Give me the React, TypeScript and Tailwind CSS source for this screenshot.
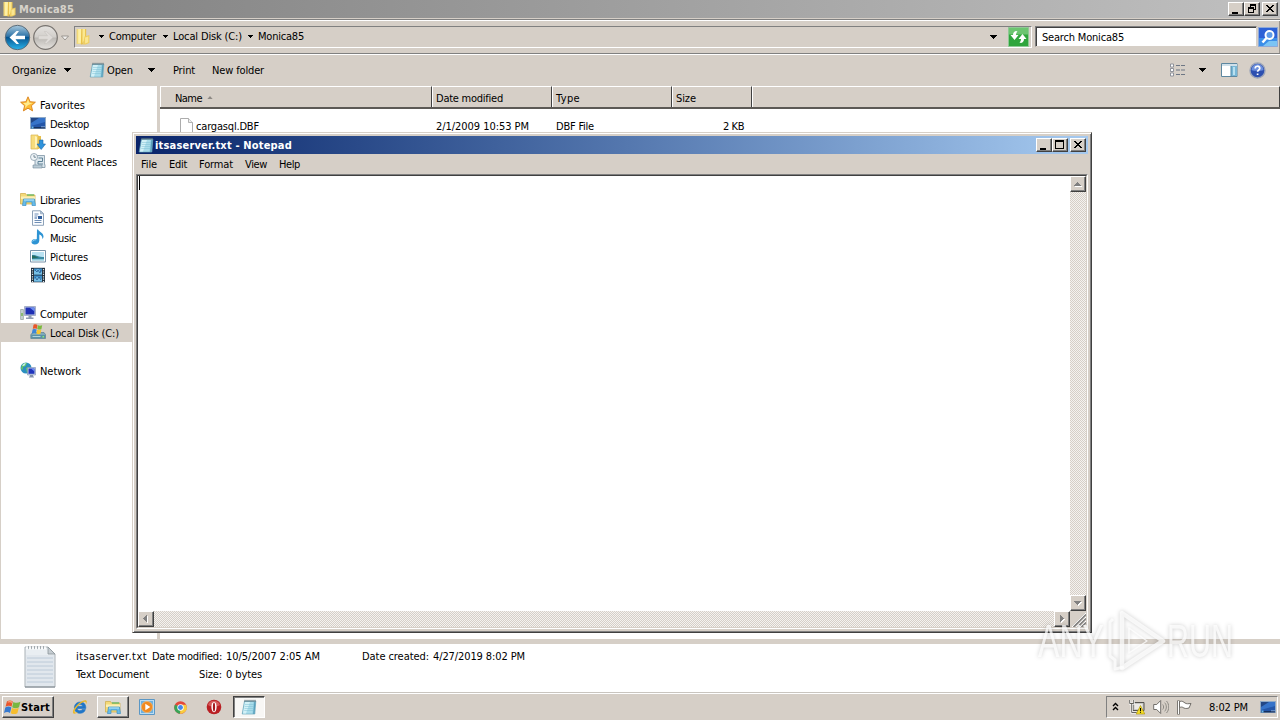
import { useLayoutEffect, useRef, useState } from "react";
import type { ReactNode } from "react";

/** One line of UI text, tracked so that it fills the given advance width. */
function Label({ text, w, className = "" }: { text: string; w: number; className?: string }) {
  const ref = useRef<HTMLSpanElement>(null);
  const [spacing, setSpacing] = useState(0);
  useLayoutEffect(() => {
    if (ref.current) setSpacing((w - ref.current.getBoundingClientRect().width) / text.length);
  }, [text, w]);
  return (
    <span className={`flex h-4 shrink-0 items-center whitespace-pre leading-4 ${className}`} style={{ width: w }}>
      <span ref={ref} style={{ letterSpacing: spacing }}>
        {text}
      </span>
    </span>
  );
}

function Down({ className = "" }: { className?: string }) {
  return (
    <svg className={`h-1 w-[7px] shrink-0 ${className}`} viewBox="0 0 7 4" shapeRendering="crispEdges">
      <path d="M0 0h7v1H6v1H5v1H4v1H3V3H2V2H1V1H0z" fill="#000" />
    </svg>
  );
}

function CrumbArrow({ className = "" }: { className?: string }) {
  return (
    <svg className={`h-[3px] w-[5px] shrink-0 ${className}`} viewBox="0 0 5 3" shapeRendering="crispEdges">
      <path d="M0 0h5v1H4v1H3v1H2V2H1V1H0z" fill="#000" />
    </svg>
  );
}

function Svg({ s = 16, children, className = "" }: { s?: number; children: ReactNode; className?: string }) {
  return (
    <svg width={s} height={s} viewBox="0 0 16 16" className={`shrink-0 ${className}`}>
      {children}
    </svg>
  );
}

const FolderIcon = ({ className = "", s = 16 }: { className?: string; s?: number }) => (
  <Svg className={className} s={s}>
    <path d="M1.500 1h5v14h-5z" fill="#f3d978" />
    <path d="M3 1h3v13.500H3z" fill="#fdf0a6" />
    <path d="M6 1h4.500v7L7 15.500H5.500z" fill="#e8c04a" />
    <path d="M7 1h2.500v10L7 14z" fill="#fbe88f" />
    <path d="M9 8l4.500-1.500V14L10 15.500H7.500z" fill="#efcd5f" />
    <path d="M9.500 9l3-1v5.500l-3 1z" fill="#fae692" />
  </Svg>
);

const NotepadIcon = ({ className = "", s = 16 }: { className?: string; s?: number }) => (
  <Svg className={className} s={s}>
    <path d="M3.500 2h11.300l-1 13H1.200z" fill="#8cc9de" stroke="#6aa3b8" strokeWidth=".7" />
    <path d="M4 3h8.500l-1 11.500H2z" fill="#a9dcea" />
    <path d="M4 3h5L5 14.500H2z" fill="#d3f1f7" />
    <path d="M13.300 3h1.200l-1 12h-1.300z" fill="#5aa0bb" />
    <path d="M4 5.500h9M3.700 7.500h9M3.500 9.500h9M3.200 11.500h9" stroke="#7fc0d4" strokeWidth=".5" />
    <path d="M4 .8v2.200M6 .8v2.200M8 .8v2.200M10 .8v2.200M12 .8v2.200M14 .8v2.200" stroke="#5c6a70" strokeWidth=".9" />
  </Svg>
);

const StarIcon = () => (
  <Svg>
    <path d="M8 .8l2.100 4.900 5.300.5-4 3.500 1.200 5.200L8 12.200l-4.600 2.700 1.200-5.200-4-3.500 5.300-.5z" fill="#fdbb35" stroke="#d9811c" strokeWidth=".9" />
    <path d="M8 3l1.300 3.700 3.500.3-5 2.300-3 3 .8-3.100L3 7l3.700-.3z" fill="#ffeb8e" />
  </Svg>
);

const DesktopIcon = () => (
  <Svg>
    <rect x=".5" y="2.500" width="15" height="11" fill="#2456a8" stroke="#8fa9c6" />
    <path d="M1 3h14v4L1 11z" fill="#3673c9" />
    <path d="M1 3h8L1 8z" fill="#234785" />
    <path d="M1 12h14v1.500H1z" fill="#16315f" />
    <path d="M1.500 11.500h2v2h-2z" fill="#69b9ee" />
    <path d="M11 11.800h4" stroke="#a8c7eb" strokeWidth=".7" />
  </Svg>
);

const DownloadsIcon = () => (
  <Svg>
    <path d="M1 1h7v14H1z" fill="#f7dc7c" stroke="#d9b550" strokeWidth=".7" />
    <path d="M8 2h3v12l-3 1z" fill="#e7bf4b" />
    <path d="M5 2l2 1v10l-2 1z" fill="#fff3b8" />
    <path d="M9.500 6h3.500v4h2.500L11.200 15.500 7 10h2.500z" fill="#2f93dc" stroke="#1b68ad" strokeWidth=".6" />
  </Svg>
);

const RecentIcon = () => (
  <Svg>
    <path d="M5 2.500h9.500v9H15v3H5z" fill="#dbe6ed" stroke="#7c93a3" strokeWidth=".8" />
    <circle cx="4" cy="4" r="3.500" fill="#f0f5f8" stroke="#899ca9" strokeWidth=".8" />
    <path d="M4 2v2.200h2" stroke="#57707f" strokeWidth=".8" fill="none" />
    <path d="M8.500 5h4v3.500H8V11h5" stroke="#5f8296" fill="none" />
    <path d="M3 12h9v3H3z" fill="#bacbd5" stroke="#748b9a" strokeWidth=".6" />
  </Svg>
);

const LibrariesIcon = ({ s = 16 }: { s?: number }) => (
  <Svg s={s}>
    <path d="M.5 2.500h5l1 1.500h8.500v9H.5z" fill="#f4da79" stroke="#cfaa46" strokeWidth=".7" />
    <path d="M1 5.500h14V8H1z" fill="#fcf0b5" />
    <path d="M7 4h7" stroke="#62b764" strokeWidth="1.300" />
    <path d="M3.500 8h11l1 6.500h-3.500V11H6v3.500H2.500z" fill="#69bce8" stroke="#3b8fc4" strokeWidth=".7" />
    <path d="M4 9h10" stroke="#b9e5f9" strokeWidth="1" />
  </Svg>
);

const DocumentIcon = () => (
  <Svg>
    <path d="M2.500.8h8l3 3v11.500h-11z" fill="#fbfdff" stroke="#8298b1" strokeWidth=".9" />
    <path d="M10.500.8v3h3z" fill="#b5c6da" stroke="#8298b1" strokeWidth=".6" />
    <path d="M4.500 4h4M4.500 6h3M4.500 10.500h7M4.500 12.500h7" stroke="#6082ae" strokeWidth=".9" />
    <path d="M8 6h4v3H8z" fill="#315e9b" />
    <path d="M4.500 8h2.500" stroke="#315e9b" />
  </Svg>
);

const MusicIcon = () => (
  <Svg>
    <path d="M8 .5c1 2.500 5.500 3 5.500 7 0 1.200-.6 2-1.200 2.500.4-2.800-1.300-4.200-3-4.600v6.400c0 2.200-2 3.700-4.500 3.700-2 0-3.300-1-3.300-2.500 0-2.200 2.800-3.400 5.300-2.700L7 .5z" fill="#2e94d4" />
    <path d="M2.700 12.500c.5-1.400 2-1.900 3.500-1.700" stroke="#9adaf8" fill="none" />
  </Svg>
);

const PicturesIcon = () => (
  <Svg>
    <path d="M.5 2.500h15v11.500H.5z" fill="#fff" stroke="#7993a9" />
    <path d="M2 4h12v8.500H2z" fill="#b9e2f2" />
    <path d="M2 7c4-.5 6 2 12 2v2.500H2z" fill="#3a8aa3" />
    <path d="M2 7.500c3 0 4 1.500 7 2L2 10.500z" fill="#266c5e" />
    <path d="M2 11h12v1.500H2z" fill="#8dc8d8" />
  </Svg>
);

const VideosIcon = () => (
  <Svg>
    <path d="M1 .8h14v14.500H1z" fill="#22303d" />
    <path d="M4 1.500h8v6H4zM4 8.500h8v6H4z" fill="#3b8cc8" />
    <path d="M4 4l4-2 4 3v2.500H4zM4 12l3-2 5 2v2.500H4z" fill="#76bfe5" />
    <path d="M5 3l2 2 1-2 2 3 1-3M5 10l2 3 2-3 2 3" stroke="#2a5f96" strokeWidth=".9" fill="none" />
    <path d="M2.500 2v13M13.500 2v13" stroke="#dfe7ec" strokeWidth="1.200" strokeDasharray="1.200 1.200" />
  </Svg>
);

const ComputerIcon = () => (
  <Svg>
    <path d="M.6 4.500h2.800v10H.6z" fill="#c7d2d3" stroke="#7d8f8d" strokeWidth=".6" />
    <path d="M1.300 8h1.400v3H1.300z" fill="#71b34d" />
    <path d="M4.500 1.500h11v9h-11z" fill="#c9d3e6" stroke="#8c98b4" strokeWidth=".7" />
    <path d="M5.500 2.500h9v7h-9z" fill="#1f2fb4" />
    <path d="M9.500 2.500h5v4z" fill="#6c8ef0" />
    <path d="M8.500 10.500h3v2h2v1.500H6v-1.500h2.500z" fill="#8f9bb2" />
  </Svg>
);

const DriveIcon = () => (
  <Svg>
    <path d="M.8 10.500L3 8.500h11l1.500 2v4H.8z" fill="#7fa9b9" stroke="#4d7688" strokeWidth=".6" />
    <path d="M1.200 11h14v3.200h-14z" fill="#5a91a6" />
    <path d="M2.500 12.500h8" stroke="#c6e2ea" strokeWidth=".8" />
    <path d="M12.500 12h1.500v1.500h-1.500z" fill="#8cf071" />
    <path d="M3.500.8c1.800-.8 3-.4 4 .2L6.800 4.900C5.500 4.300 4.500 4.300 2.800 4.900z" fill="#e8562a" />
    <path d="M7.900 1.300c1.500.7 2.800.6 4.300 0l-.8 3.900c-1.500.6-2.800.5-4.200-.2z" fill="#7cba3d" />
    <path d="M2.600 5.400c1.700-.7 3-.5 4.100.2L5.900 9.500c-1.300-.7-2.400-.6-4.100 0z" fill="#3c86d8" />
    <path d="M7.100 5.700c1.500.6 2.800.6 4.200 0l-.8 4c-1.400.7-2.700.5-4.100-.1z" fill="#f7c52f" />
  </Svg>
);

const NetworkIcon = () => (
  <Svg>
    <circle cx="6" cy="6" r="5.500" fill="#2b8fc0" />
    <path d="M2 3c2-2.500 4-2 5-2L5.500 4 3 5 2.500 8 1 7zM6 6l3-1 1 3-3 3z" fill="#69c860" />
    <path d="M2 3.500C3.500 1.500 5 1 6 1.200L4 4z" fill="#c5ecf7" />
    <path d="M7.500 5.500h8v7.500h-8z" fill="#c9d3e6" stroke="#7b8cae" strokeWidth=".6" />
    <path d="M8.500 6.500h6v5.300h-6z" fill="#2035bd" />
    <path d="M11 6.500h3.500v3z" fill="#6f8ff2" />
    <path d="M10 13h3v1.500h1v1H9v-1h1z" fill="#8492ab" />
  </Svg>
);

const FlagLogo = () => (
  <svg width="17" height="18" viewBox="0 0 14.500 14.500" className="shrink-0">
    <path d="M2.500 2.500c2-1.300 3.600-1 5 0L6.400 7C5 6 3.300 6 1.300 7z" fill="#e9552c" />
    <path d="M8 3c1.900 1 3.900 1 6-.2L12.800 7.400c-2 1.200-4 1-5.800.1z" fill="#78b741" />
    <path d="M1.100 7.600c2-1.100 3.700-1 5.200 0L5.100 12.300c-1.400-1-3.300-1-5.100 0z" fill="#3679cf" />
    <path d="M6.800 8c1.800.9 3.800.9 5.800-.1l-1.200 4.600c-2 1.100-4 .9-5.700 0z" fill="#f6bd2e" />
    <path d="M4 2c1-.4 2 0 3 .6L6.700 4C5.500 3 4.500 3.200 3 3.700z" fill="#f99a71" />
  </svg>
);

const raised = "border border-t-white border-l-white border-r-[#404040] border-b-[#404040] shadow-[inset_-1px_-1px_0_#808080]";

type Glyph = "min" | "max" | "restore" | "close";
function CaptionButton({ glyph, className = "" }: { glyph: Glyph; className?: string }) {
  return (
    <button className={`flex h-[14px] w-4 items-center justify-center bg-[#d6cfc7] ${raised} ${className}`}>
      <svg width="12" height="10" viewBox="0 0 12 10" className="shrink-0" shapeRendering="crispEdges">
        {glyph === "min" && <path d="M2 8h6v2H2z" />}
        {glyph === "max" && <path d="M1 0h9v9H1zM2 2v6h7V2z" fillRule="evenodd" />}
        {glyph === "restore" && (
          <path fillRule="evenodd" d="M4 0h6v6H8v3H2V3h2zM5 2v1h3v2h1V2zM3 5v3h4V5z" />
        )}
        {glyph === "close" && (
          <path d="M2 1h2v1h1v1h2V2h1V1h2v1H9v1H8v1H7v1h1v1h1v1h1v1H8V7H7V6H5v1H4v1H2V7h1V6h1V5h1V4H4V3H3V2H2z" />
        )}
      </svg>
    </button>
  );
}

function ScrollButton({ d }: { d: string }) {
  return (
    <div className={`flex h-4 w-4 shrink-0 items-center justify-center bg-[#d6cfc7] ${raised}`}>
      <svg width="10" height="10" viewBox="0 0 10 10" shapeRendering="crispEdges">
        <path d={d} fill="#fff" transform="translate(1 1)" />
        <path d={d} fill="#808080" />
      </svg>
    </div>
  );
}

const places: { text: string; w: number; icon: ReactNode; child?: boolean; on?: boolean }[][] = [
  [
    { text: "Favorites", w: 45, icon: <StarIcon /> },
    { text: "Desktop", w: 39, icon: <DesktopIcon />, child: true },
    { text: "Downloads", w: 52, icon: <DownloadsIcon />, child: true },
    { text: "Recent Places", w: 67, icon: <RecentIcon />, child: true },
  ],
  [
    { text: "Libraries", w: 40, icon: <LibrariesIcon /> },
    { text: "Documents", w: 53, icon: <DocumentIcon />, child: true },
    { text: "Music", w: 26, icon: <MusicIcon />, child: true },
    { text: "Pictures", w: 38, icon: <PicturesIcon />, child: true },
    { text: "Videos", w: 31, icon: <VideosIcon />, child: true },
  ],
  [
    { text: "Computer", w: 47, icon: <ComputerIcon /> },
    { text: "Local Disk (C:)", w: 69, icon: <DriveIcon />, child: true, on: true },
  ],
  [{ text: "Network", w: 41, icon: <NetworkIcon /> }],
];

function TitleBar() {
  return (
    <header className="flex h-[18px] shrink-0 items-center bg-linear-to-r from-[#808080] to-[#c0c0c0] pl-[2px] pr-[2px]">
      <FolderIcon />
      <Label text="Monica85" w={55} className="ml-px mt-0.5 font-bold text-[#d6d2ca]" />
      <div className="ml-auto flex">
        <CaptionButton glyph="min" />
        <CaptionButton glyph="restore" />
        <CaptionButton glyph="close" className="ml-[2px]" />
      </div>
    </header>
  );
}

function AddressBar() {
  return (
    <div className="mt-px flex h-[35px] shrink-0 items-center border-y border-t-[#808080] border-b-[#808080] pl-1 pr-[2px] shadow-[inset_0_1px_0_#fff,inset_-1px_0_0_#9a958f,0_1px_0_#fff]">
      <svg width="66" height="30" viewBox="0 0 66 30" className="shrink-0">
        <defs>
          <linearGradient id="back" x1="0" y1="0" x2="0" y2="1">
            <stop offset="0" stopColor="#a9c9dd" />
            <stop offset=".45" stopColor="#2f74a8" />
            <stop offset=".5" stopColor="#075590" />
            <stop offset="1" stopColor="#28b4ec" />
          </linearGradient>
          <linearGradient id="fwd" x1="0" y1="0" x2="0" y2="1">
            <stop offset="0" stopColor="#e4e2df" />
            <stop offset=".48" stopColor="#d2cfcb" />
            <stop offset=".52" stopColor="#bbb8b4" />
            <stop offset="1" stopColor="#e6e3df" />
          </linearGradient>
        </defs>
        <circle cx="13.500" cy="15.500" r="12.200" fill="url(#back)" stroke="#5c6c78" />
        <path d="M5.500 15.500l7-6.500h2.500l-3.500 4.700H21v3.600h-9.500L15 22h-2.500z" fill="#fff" />
        <circle cx="41.500" cy="15.500" r="11.800" fill="url(#fwd)" stroke="#77736f" strokeWidth="1.200" />
        <path d="M49 15.500L42.500 9.500h-2.200l3.200 4.200H34.500v3.600h9L40.300 21.500h2.200z" fill="#dedbd8" stroke="#c3bfbb" strokeWidth=".5" />
        <path d="M57.500 14h7L61 18z" fill="#f2f0ee" stroke="#8a8680" strokeWidth=".8" />
      </svg>
      <div className="ml-1 flex h-[22px] grow items-center border border-[#808080] border-b-white border-r-white">
        <FolderIcon s={17} />
        <CrumbArrow className="ml-[7px]" />
        <Label text="Computer" w={47} className="ml-[5px]" />
        <CrumbArrow className="ml-[7px]" />
        <Label text="Local Disk (C:)" w={69} className="ml-[5px]" />
        <CrumbArrow className="ml-[6px]" />
        <Label text="Monica85" w={46} className="ml-[5px]" />
        <Down className="ml-auto mr-[11px] mt-[1px]" />
        <svg width="21" height="20" viewBox="0 0 21 20" className="mr-[2px] shrink-0">
          <path d="M.5.500h20v19H.5z" fill="#2fa53c" stroke="#8fc995" />
          <path d="M1 1h19v6.500H1z" fill="#6cc570" />
          <path d="M8 4C6 4.500 5 6 5 8H2.500l4 5 4-5H8c0-1.500.5-2.500 1.500-3.500z" fill="#fff" />
          <path d="M13 16c2-.5 3-2 3-4h2.500l-4-5-4 5H13c0 1.500-.5 2.500-1.500 3.500z" fill="#fff" />
        </svg>
      </div>
      <div className="ml-[3px] flex h-[21px] w-[222px] items-center border border-[#808080] border-b-[#d6cfc7] border-r-[#d6cfc7] bg-white pl-[6px] shadow-[inset_1px_1px_0_#404040]">
        <Label text="Search Monica85" w={82} className="mt-0.5" />
      </div>
      <svg width="20" height="20" viewBox="0 0 20 20" className="ml-px shrink-0">
        <path d="M.5.500h19v19H.5z" fill="#2d61d6" stroke="#8ea9d8" />
        <path d="M1 11h18v8H1z" fill="#3c8ee8" />
        <path d="M11 14h8v5H5z" fill="#7cc4f4" />
        <circle cx="11.500" cy="8" r="4" fill="#5e9ae8" stroke="#fff" strokeWidth="2" />
        <path d="M8.500 11L4.500 15.500" stroke="#fff" strokeWidth="2.500" />
      </svg>
    </div>
  );
}

function CommandBar() {
  return (
    <div className="mt-px flex h-[31px] shrink-0 items-center pl-3 pr-[14px]">
      <Label text="Organize" w={44} />
      <Down className="ml-2 -mt-px" />
      <NotepadIcon className="ml-[18px] -mt-0.5" />
      <Label text="Open" w={26} className="ml-[2px]" />
      <Down className="ml-[15px] -mt-px" />
      <Label text="Print" w={22} className="ml-[18px]" />
      <Label text="New folder" w={52} className="ml-[17px]" />
      <svg width="16" height="14" viewBox="0 0 16 14" className="-mt-0.5 ml-auto">
        <path d="M.5 1h3v3h-3zM.5 5.500h3v3h-3zM.5 10h3v3h-3z" fill="#fff" stroke="#7a7f8a" strokeWidth=".8" />
        <path d="M6 2.500h4M11 2.500h4M6 7h4M11 7h4M6 11.500h4M11 11.500h4" stroke="#6d7684" />
      </svg>
      <Down className="-mt-px ml-[13px]" />
      <svg width="17" height="14" viewBox="0 0 17 14" className="-mt-0.5 ml-[15px]">
        <path d="M.5.500h15.500v13H.5z" fill="#fff" stroke="#5d87a0" />
        <path d="M1 1h15v2H1z" fill="#cfe0ea" />
        <path d="M10 3h6v10h-6z" fill="#79b7d6" />
        <path d="M10 3v10" stroke="#4f87a6" />
        <path d="M13 4v8" stroke="#b9e0f0" strokeWidth="2" />
      </svg>
      <svg width="17" height="17" viewBox="0 0 17 17" className="-mt-px ml-[11px]">
        <circle cx="8.500" cy="8.500" r="7.500" fill="#2d4fb0" stroke="#9ba4b8" strokeWidth="1.400" />
        <path d="M2.500 8a6 6 0 0 1 12 0c-3 1.200-9 1.200-12 0z" fill="#6d8fdc" />
        <path d="M6.200 6.500c0-3 4.600-3 4.600-.2 0 1.700-2.200 1.700-2.200 3.500M8.600 11.400v1.700" stroke="#fff" strokeWidth="1.700" fill="none" />
      </svg>
    </div>
  );
}

function Sidebar() {
  return (
    <nav className="flex w-[157px] shrink-0 flex-col gap-[19px] border-l border-[#d6cfc7] bg-white pt-[9px]">
      {places.map((group) => (
        <ul key={group[0].text}>
          {group.map((p) => (
            <li
              key={p.text}
              className={`flex h-[19px] items-center gap-1 ${p.child ? "pl-[29px]" : "pl-[19px]"} ${p.on ? "bg-[#d6cfc7]" : ""}`}
            >
              <span className="-mt-0.5">{p.icon}</span>
              <Label text={p.text} w={p.w} className="mt-0.5" />
            </li>
          ))}
        </ul>
      ))}
    </nav>
  );
}

const headCell = "flex h-full items-center border-t border-l border-t-white border-l-white border-r border-r-[#404040]";

function FileList() {
  return (
    <main className="ml-[3px] flex grow flex-col bg-white">
      <div className="flex h-[23px] shrink-0 border-b-2 border-b-[#5c5955] bg-[#d6cfc7]">
        <div className={`${headCell} w-[272px] pl-[14px]`}>
          <Label text="Name" w={27} className="mt-1" />
          <svg width="6" height="3" viewBox="0 0 7 4" className="ml-[5px]">
            <path d="M3.500 0L7 4H0z" fill="#8d8984" />
          </svg>
        </div>
        <div className={`${headCell} w-[120px] pl-[3px]`}>
          <Label text="Date modified" w={67} className="mt-1" />
        </div>
        <div className={`${headCell} w-[120px] pl-[3px]`}>
          <Label text="Type" w={24} className="mt-1" />
        </div>
        <div className={`${headCell} w-[80px] pl-[3px]`}>
          <Label text="Size" w={20} className="mt-1" />
        </div>
        <div className={`${headCell} grow`} />
      </div>
      <div className="mt-[8px] flex h-5 items-center">
        <svg width="13" height="16" viewBox="0 0 13 16" className="-mt-0.5 ml-5">
          <path d="M.5.500h8l4 4v11H.5z" fill="#fff" stroke="#a3a3a3" strokeWidth=".9" />
          <path d="M8.500.500v4h4" fill="#eee" stroke="#a3a3a3" strokeWidth=".8" />
        </svg>
        <Label text="cargasql.DBF" w={63} className="ml-[3px]" />
        <Label text="2/1/2009 10:53 PM" w={93} className="ml-[177px]" />
        <Label text="DBF File" w={38} className="ml-[27px]" />
        <Label text="2 KB" w={21} className="ml-[129px]" />
      </div>
    </main>
  );
}

function Details() {
  return (
    <section className="flex h-12 shrink-0 bg-white">
      <svg width="32" height="43" viewBox="0 0 32 43" className="ml-[24px] mt-[1px] shrink-0">
        <path d="M1 2h23l7 7v33H1z" fill="#e9eef2" stroke="#a9b0b5" />
        <path d="M2 10h28v31H2z" fill="#e1e7ed" />
        <path d="M3 13h26M3 17h26M3 21h26M3 25h26M3 29h26M3 33h26M3 37h26" stroke="#bccad8" />
        <path d="M24 2v7h7z" fill="#c5ccd1" stroke="#8c9499" strokeWidth=".8" />
        <path d="M3 1.500v3M6 1.500v3M9 1.500v3M12 1.500v3M15 1.500v3M18 1.500v3M21 1.500v3" stroke="#fff" strokeWidth="1.600" />
        <path d="M4.500 1v3M7.500 1v3M10.500 1v3M13.500 1v3M16.500 1v3M19.500 1v3" stroke="#8e969c" strokeWidth=".7" />
        <path d="M1 42h30" stroke="#7d868d" />
      </svg>
      <div className="ml-5 flex flex-col gap-[2px] pt-[5px]">
        <div className="flex">
          <Label text="itsaserver.txt" w={71} />
          <Label text="Date modified:" w={70} className="ml-[5px]" />
          <Label text="10/5/2007 2:05 AM" w={94} className="ml-1" />
          <Label text="Date created:" w={67} className="ml-[42px]" />
          <Label text="4/27/2019 8:02 PM" w={92} className="ml-1" />
        </div>
        <div className="flex">
          <Label text="Text Document" w={73} />
          <Label text="Size:" w={23} className="ml-[50px]" />
          <Label text="0 bytes" w={36} className="ml-1" />
        </div>
      </div>
    </section>
  );
}

function Taskbar() {
  return (
    <footer className="flex h-[27px] shrink-0 items-center border-t border-t-white bg-[#d6cfc7] pl-[2px] pr-[2px] shadow-[0_-1px_0_#c9c5bf]">
      <button className={`flex h-[22px] w-[52px] items-center pl-px ${raised}`}>
        <FlagLogo />
        <Label text="Start" w={29} className="mt-0.5 font-bold" />
      </button>
      <Svg className="ml-[18px]">
        <path d="M13.800 9.500H5.200c.2 2.300 3.600 3 5 1h3.200c-1.300 4.600-7.700 5-10 1.500C.8 8 3.300 3 8.300 3c3.800 0 5.800 2.800 5.500 6.500zM5.300 7.300h5.300C10.200 4.800 6 4.800 5.300 7.300z" fill="#2076c8" fillRule="evenodd" stroke="#2076c8" strokeWidth=".6" />
        <path d="M1.500 14.500C-1.500 12 7 2 13 1.200c2.500-.2 2 2.500.8 4.300.2-1.800.2-3-1.300-2.800C8 3.500 2 11 2.700 13c.4 1 2 .4 3 0-1.200 1.200-3 2.200-4.200 1.500z" fill="#e9b82c" />
      </Svg>
      <button className={`ml-[9px] flex h-[22px] w-8 items-center justify-center bg-[#dedad4] ${raised}`}>
        <LibrariesIcon />
      </button>
      <Svg className="ml-[10px]">
        <path d="M.5.500h15v15H.5z" fill="#b9dcf3" stroke="#5b97c5" />
        <path d="M2 2h12v12H2z" fill="#6fb1de" />
        <circle cx="8" cy="8" r="5.600" fill="#f18a1f" stroke="#f6b86f" strokeWidth=".8" />
        <path d="M6.300 4.800L11.300 8l-5 3.200z" fill="#fff" />
      </Svg>
      <Svg className="ml-[18px]" s={15}>
        <circle cx="8" cy="8" r="6.700" fill="#e4483a" />
        <path d="M8 8L2.200 4.700A6.700 6.700 0 0 0 7.500 14.700z" fill="#39a457" />
        <path d="M8 8h6.700a6.700 6.700 0 0 1-7.200 6.700z" fill="#f8cd3e" />
        <path d="M8 5h6c1.200 3 .6 5-.5 6.700L8 8z" fill="#f8cd3e" />
        <circle cx="8" cy="8" r="3.400" fill="#fff" />
        <circle cx="8" cy="8" r="2.600" fill="#4387e8" />
      </Svg>
      <Svg className="ml-[18px]">
        <circle cx="8" cy="8" r="7.300" fill="#b91f23" />
        <path d="M2 6c1-5 10-6 12 0-3 2-9 2-12 0z" fill="#d65a5a" />
        <ellipse cx="8" cy="8" rx="2.600" ry="5.300" fill="#fff" />
        <ellipse cx="8" cy="8" rx="1.100" ry="4.600" fill="#a5191d" />
      </Svg>
      <button className="ml-[11px] flex h-[22px] w-8 items-center justify-center border border-[#404040] border-b-white border-r-white bg-[#f8f7f5] shadow-[inset_1px_1px_0_#808080]">
        <NotepadIcon />
      </button>
      <div className="ml-auto flex h-[22px] w-[172px] items-center border border-[#808080] border-b-white border-r-white pl-[6px]">
        <svg width="7" height="9" viewBox="0 0 7 9" className="-ml-px -mt-0.5">
          <path d="M1 4l2.500-2.500L6 4M1 8l2.500-2.500L6 8" fill="none" stroke="#000" strokeWidth="1.400" />
        </svg>
        <Svg className="ml-[10px]">
          <path d="M4 3.500h11v8H4z" fill="#c8c8c4" stroke="#55534f" />
          <path d="M5.500 5h8v5h-8z" fill="#eceae6" />
          <path d="M.7 1v3.500h4V1M2.700 4.500v9h5" stroke="#fff" strokeWidth="2.200" fill="none" />
          <path d="M.7 1v3.500h4V1M2.700 4.500v9h5" stroke="#55534f" strokeWidth=".9" fill="none" />
          <path d="M11.500 6.500l4.300 8.500H7.200z" fill="#f6dd24" stroke="#a58d12" strokeWidth=".6" />
          <path d="M11.500 9v3M11.500 12.800v1" stroke="#000" strokeWidth="1.100" />
        </Svg>
        <Svg className="ml-2">
          <path d="M.7 5.500h3l4-4v13l-4-4h-3z" fill="#fff" stroke="#65625e" strokeWidth=".9" />
          <path d="M9.700 5.500c1.200 1.500 1.200 3.500 0 5M11.700 3.700c2.200 2.500 2.200 6 0 8.600M13.500 2c3 3.500 3 8.500 0 12" stroke="#85827d" strokeWidth=".9" fill="none" />
        </Svg>
        <Svg className="ml-[7px]">
          <path d="M2.500 1.500v14" stroke="#65625e" strokeWidth="2.600" />
          <path d="M2.500 2v13" stroke="#fff" strokeWidth="1" />
          <path d="M3.500 2.500c3-1 4 .5 5.500 1.500 1.500 1 3 .8 6 .5L13 9c-3 1-5 .3-6-.5-1-.7-2-.5-3.500 0z" fill="#fff" stroke="#65625e" strokeWidth=".9" />
        </Svg>
        <Label text="8:02 PM" w={39} className="ml-[17px] mt-0.5" />
        <span className="ml-3">
          <DesktopIcon />
        </span>
      </div>
    </footer>
  );
}

const track = "bg-[repeating-conic-gradient(#f4f2f0_0_25%,#d6cfc7_0_50%)] bg-[length:2px_2px]";

function Notepad() {
  return (
    <div className="absolute left-[132px] top-[132px] flex h-[501px] w-[960px] flex-col border border-t-[#d6cfc7] border-l-[#d6cfc7] border-r-[#404040] border-b-[#404040] bg-[#d6cfc7] px-[3px] pb-[3px] pt-[3px] shadow-[inset_1px_1px_0_#fff,inset_-1px_-1px_0_#808080]">
      <div className="flex h-[18px] shrink-0 items-center bg-linear-to-r from-[#0a246a] to-[#a6caf0] pl-[2px] pr-[2px]">
        <NotepadIcon />
        <Label text="itsaserver.txt - Notepad" w={137} className="ml-px mt-0.5 font-bold text-white" />
        <div className="ml-auto flex">
          <CaptionButton glyph="min" />
          <CaptionButton glyph="max" />
          <CaptionButton glyph="close" className="ml-[2px]" />
        </div>
      </div>
      <div className="flex h-5 shrink-0 items-center pl-[5px] pt-0.5">
        <Label text="File" w={16} />
        <Label text="Edit" w={18} className="ml-3" />
        <Label text="Format" w={34} className="ml-3" />
        <Label text="View" w={22} className="ml-3" />
        <Label text="Help" w={21} className="ml-3" />
      </div>
      <div className="flex grow flex-col border border-[#808080] border-b-white border-r-white">
        <div className="flex grow flex-col border border-[#404040] border-b-[#d6cfc7] border-r-[#d6cfc7]">
          <div className="flex grow">
            <div className="grow bg-white pl-px">
              <div className="h-[14px] w-px bg-black" />
            </div>
            <div className={`flex w-4 flex-col justify-between ${track}`}>
              <ScrollButton d="M4 3h1v1h1v1h1v1h1v1H1V6h1V5h1V4h1z" />
              <ScrollButton d="M1 3h7v1H7v1H6v1H5v1H4V6H3V5H2V4H1z" />
            </div>
          </div>
          <div className="flex h-4 shrink-0">
            <div className={`flex grow justify-between ${track}`}>
              <ScrollButton d="M6 1v7H5V7H4V6H3V5H2V4h1V3h1V2h1V1z" />
              <ScrollButton d="M3 1v7h1V7h1V6h1V5h1V4H6V3H5V2H4V1z" />
            </div>
            <svg width="16" height="16" viewBox="0 0 16 16">
              <path d="M2 16L16 2M6 16L16 6M10 16l6-6" stroke="#fff" />
              <path d="M3.500 16L16 3.500M7.500 16L16 7.500M11.500 16l4.500-4.500" stroke="#808080" strokeWidth="1.500" />
            </svg>
          </div>
        </div>
      </div>
    </div>
  );
}

function Watermark() {
  return (
    <svg
      className="pointer-events-none absolute left-[1020px] top-[592px] drop-shadow-[0_0_2px_rgba(0,0,0,0.26)]"
      width="260"
      height="96"
      viewBox="0 0 260 96"
      fontFamily="'Liberation Sans Narrow','Liberation Sans',sans-serif"
      fontSize="46"
    >
      <g fill="#fff" fillOpacity=".75">
        <text x="18" y="65" textLength="66" lengthAdjust="spacingAndGlyphs">
          ANY
        </text>
        <text x="147" y="65" textLength="66" lengthAdjust="spacingAndGlyphs">
          RUN
        </text>
      </g>
      <g fill="none" stroke="#fff" strokeOpacity=".75" strokeLinejoin="round">
        <path d="M102 21v55l41-27z" strokeWidth="4.500" />
        <path d="M93 27l-3 3v34l5 4v9l9-2" strokeWidth="3" />
        <path d="M109 36v25l18-12z" strokeWidth="1.500" />
      </g>
    </svg>
  );
}

export default function App() {
  return (
    <div className="relative flex h-[720px] w-[1280px] flex-col overflow-hidden bg-[#d6cfc7] font-['DejaVu_Sans_Condensed','DejaVu_Sans',sans-serif] text-[11px] text-black [font-stretch:condensed]">
      <TitleBar />
      <AddressBar />
      <CommandBar />
      <div className="flex grow">
        <Sidebar />
        <FileList />
      </div>
      <div className="h-[5px] shrink-0" />
      <Details />
      <div className="h-px shrink-0" />
      <Taskbar />
      <Notepad />
      <Watermark />
    </div>
  );
}
